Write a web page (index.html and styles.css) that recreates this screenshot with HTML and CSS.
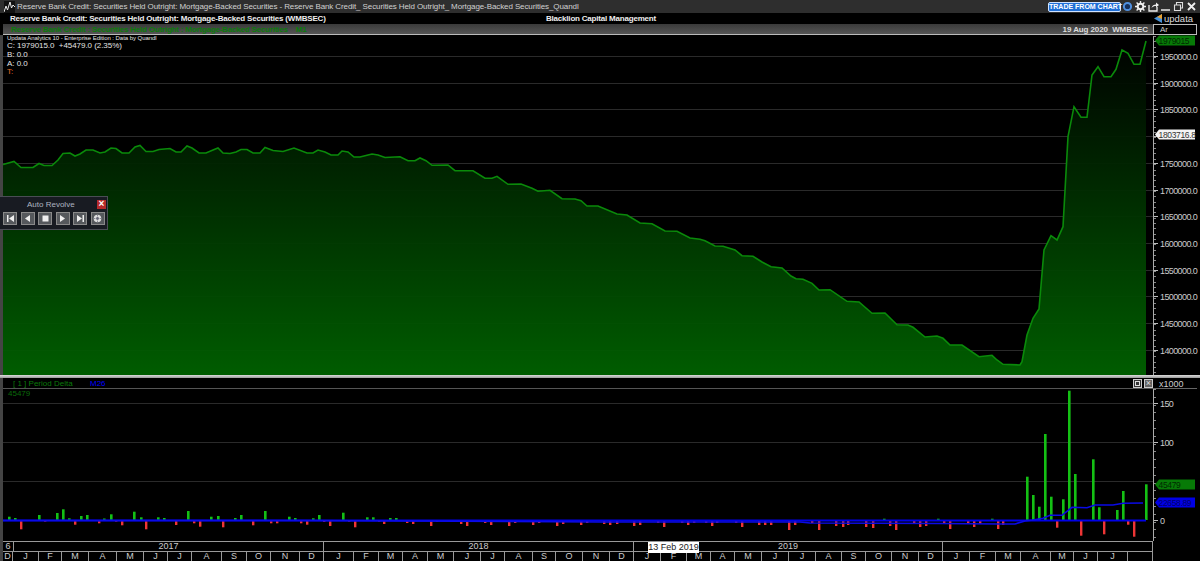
FILE: index.html
```html
<!DOCTYPE html>
<html>
<head>
    <title>Reserve Bank Credit - WMBSEC</title>
    <link rel="stylesheet" href="styles.css">
</head>
<body>
    <div class="app">
        <div class="titlebar">
            <svg class="app-logo" viewBox="0 0 11 12"><path d="M0 11 L2 5 L3.5 9 L6 1 L7.5 7 L9 4 L11 6" fill="none" stroke="#e8e8e8" stroke-width="1"/></svg>
            <span class="title-text">Reserve Bank Credit: Securities Held Outright: Mortgage-Backed Securities - Reserve Bank Credit_ Securities Held Outright_ Mortgage-Backed Securities_Quandl</span>
            <button class="trade-button">TRADE FROM CHART</button>
            <div class="window-icons">
                <svg viewBox="0 0 11 11"><circle cx="5.5" cy="5.5" r="3.6" fill="#16305c" stroke="#4f8fe0" stroke-width="2"/></svg>
                <svg viewBox="0 0 11 11"><circle cx="5.5" cy="5.5" r="2.8" fill="none" stroke="#eee" stroke-width="2"/><path d="M5.5 0V2M5.5 9V11M0 5.5H2M9 5.5H11M1.6 1.6L3 3M8 8L9.4 9.4M1.6 9.4L3 8M8 3L9.4 1.6" stroke="#eee" stroke-width="1.4"/></svg>
                <svg viewBox="0 0 11 11"><path d="M1 4V10H9V6" fill="none" stroke="#eee" stroke-width="1.3"/><path d="M3.5 7C4 4.5 6 3.5 8 3.5V1.5L11 4L8 6.5V5C6 5 5 5.5 3.5 7Z" fill="#eee"/></svg>
                <svg viewBox="0 0 11 11"><path d="M1 9H10" stroke="#ddd" stroke-width="1.6"/></svg>
                <svg viewBox="0 0 11 11"><path d="M1.5 4H7.5V9.5H1.5ZM3.5 4V1.5H9.5V7H7.5" fill="none" stroke="#ddd" stroke-width="1.1"/></svg>
                <svg viewBox="0 0 11 11"><path d="M2 2L9 9M9 2L2 9" stroke="#eee" stroke-width="1.8"/></svg>
            </div>
        </div>

        <div class="headline">
            <span class="headline-title">Reserve Bank Credit: Securities Held Outright: Mortgage-Backed Securities (WMBSEC)</span>
            <span class="headline-company">Blacklion Capital Management</span>
            <div class="brand">
                <svg viewBox="0 0 8 9"><path d="M0 4.5L8 0V9Z" fill="#4a94dc"/><path d="M3 3L8 0V5Z" fill="#e8a030"/></svg>
                <span>updata</span>
            </div>
        </div>

        <div class="subbar">
            <div class="subbar-plot">
                <span class="subbar-name">Reserve Bank Credit : Securities Held Outright : Mortgage-Backed Securities &nbsp;&nbsp; M1</span>
                <span class="subbar-date">19 Aug 2020&nbsp; WMBSEC</span>
            </div>
            <div class="subbar-axis">Ar</div>
        </div>

        <div class="pane pane-main">
            <div class="plot">
                <svg id="price-plot" class="plot-svg" viewBox="3 35 1150 340"></svg>
                <div class="legend">
                    <div class="legend-small">Updata Analytics 10 - Enterprise Edition : Data by Quandl</div>
                    <div>C: 1979015.0 &nbsp;+45479.0 (2.35%)</div>
                    <div>B: 0.0</div>
                    <div>A: 0.0</div>
                    <div class="legend-t">T:</div>
                </div>
            </div>
            <svg id="price-axis" class="axis-svg" viewBox="1153 35 47 340"></svg>
        </div>

        <div class="divider"></div>

        <div class="pane pane-lower">
            <div class="plot">
                <div class="delta-header">
                    <span class="delta-name">[ 1 ] Period Delta</span>
                    <span class="delta-ma">M26</span>
                    <div class="pane-buttons">
                        <span class="pane-button"><span class="pane-button-dot"></span></span>
                        <span class="pane-button pane-button-x">×</span>
                    </div>
                </div>
                <div class="delta-value">45479</div>
                <svg id="delta-plot" class="delta-svg" viewBox="3 389 1150 152"></svg>
            </div>
            <svg id="delta-axis" class="axis-svg" viewBox="1153 378 47 163"></svg>
        </div>

        <div class="timeline">
            <div class="year-row" id="year-row"></div>
            <div class="month-row" id="month-row"></div>
            <div class="date-flag">13 Feb 2019</div>
        </div>

        <div class="revolve">
            <div class="revolve-head">
                <span>Auto Revolve</span>
                <button class="revolve-close">×</button>
            </div>
            <div class="revolve-buttons">
                <button><svg viewBox="0 0 9 9"><path d="M1 1H2.5V8H1ZM8 1V8L3 4.5Z" fill="#eee"/></svg></button>
                <button><svg viewBox="0 0 9 9"><path d="M7 1V8L2 4.5Z" fill="#eee"/></svg></button>
                <button><svg viewBox="0 0 9 9"><path d="M1.5 1.5H7.5V7.5H1.5Z" fill="#eee"/></svg></button>
                <button><svg viewBox="0 0 9 9"><path d="M2 1V8L7 4.5Z" fill="#eee"/></svg></button>
                <button><svg viewBox="0 0 9 9"><path d="M1 1V8L6 4.5ZM6.5 1H8V8H6.5Z" fill="#eee"/></svg></button>
                <button><svg viewBox="0 0 9 9"><circle cx="4.5" cy="4.5" r="3.8" fill="#ddd"/><circle cx="4.5" cy="4.5" r="1.4" fill="#667"/><path d="M4.5 0.7V2.4M4.5 6.6V8.3M0.7 4.5H2.4M6.6 4.5H8.3" stroke="#667" stroke-width=".7"/></svg></button>
            </div>
        </div>
    </div>

    <script src="chart.js"></script>
</body>
</html>
```

FILE: styles.css
```css
body {
    margin: 0;
    background-color: #000;
    font-family: "Liberation Sans", Arial, sans-serif;
    color: #ddd;
    overflow: hidden;
}
.app {
    position: relative;
    width: 1200px;
    height: 561px;
    display: flex;
    flex-direction: column;
    overflow: hidden;
}
.titlebar {
    height: 13px;
    display: flex;
    align-items: center;
    background-color: #2e2e2e;
    padding-left: 4px;
    font-size: 8px;
    color: #d0d0d0;
}
.app-logo {
    width: 11px;
    height: 12px;
    margin-right: 2px;
    background-color: #111;
}
.title-text {
    flex: 1;
    white-space: nowrap;
    letter-spacing: -0.1px;
    overflow: hidden;
}
.trade-button {
    width: 73px;
    height: 10px;
    padding: 0;
    border: 1px solid #cfe2ff;
    border-radius: 2px;
    background-color: #1f6fd6;
    color: #fff;
    font-family: inherit;
    font-size: 7px;
    font-weight: bold;
    line-height: 8px;
    white-space: nowrap;
    margin-right: 1px;
}
.window-icons {
    display: flex;
    gap: 1.8px;
    padding-right: 3px;
}
.window-icons svg {
    width: 11px;
    height: 11px;
    display: block;
}
.headline {
    height: 11px;
    display: flex;
    align-items: center;
    padding-left: 10px;
    background-color: #000;
    font-size: 8px;
    font-weight: bold;
    color: #eee;
    white-space: nowrap;
}
.headline-title {
    width: 536px;
    letter-spacing: -0.19px;
}
.headline-company {
    width: 608px;
    letter-spacing: -0.2px;
}
.brand {
    display: flex;
    align-items: center;
    gap: 2px;
    font-size: 9.5px;
    font-weight: normal;
    color: #ddd;
}
.brand svg {
    width: 8px;
    height: 9px;
}
.subbar {
    height: 11px;
    display: flex;
    font-size: 8px;
    white-space: nowrap;
}
.subbar-plot {
    width: 1150px;
    margin-left: 3px;
    display: flex;
    justify-content: space-between;
    align-items: center;
    box-sizing: border-box;
    padding: 0 5px 0 8px;
    background: linear-gradient(#3a3a3a, #555);
    border-bottom: 1px solid #bbb;
}
.subbar-name {
    color: #0a7a0a;
    font-weight: bold;
    letter-spacing: -0.2px;
}
.subbar-date {
    color: #ddd;
    font-weight: bold;
    letter-spacing: -0.1px;
}
.subbar-axis {
    width: 44px;
    box-sizing: border-box;
    padding-left: 6px;
    border: 1px solid #bbb;
    line-height: 9px;
    color: #ccc;
}
.pane {
    display: flex;
}
.pane-main {
    height: 340px;
}
.pane-lower {
    height: 163px;
}
.plot {
    position: relative;
    width: 1150px;
    display: flex;
    flex-direction: column;
    border-left: 3px solid #444;
    box-shadow: -1px 0 0 #bbb;
}
.plot-svg {
    width: 1150px;
    height: 340px;
    display: block;
}
.axis-svg {
    width: 47px;
    height: 100%;
    display: block;
}
.axis-label {
    letter-spacing: -0.6px;
}
.axis-tag {
    letter-spacing: -0.35px;
}
.legend {
    position: absolute;
    left: 4px;
    top: 0;
    font-size: 8px;
    line-height: 8.8px;
    letter-spacing: -0.05px;
    color: #e4e4e4;
}
.legend-small {
    font-size: 6px;
    line-height: 7px;
}
.legend-t {
    color: #e8702a;
}
.divider {
    height: 3px;
    background: linear-gradient(#ddd, #999);
}
.delta-header {
    height: 11px;
    box-sizing: border-box;
    display: flex;
    align-items: center;
    padding-left: 10px;
    border-bottom: 1px solid #555;
    font-size: 8px;
}
.delta-name {
    width: 77px;
    color: #0a7a0a;
}
.delta-ma {
    color: #0000ff;
}
.pane-buttons {
    margin-left: auto;
    display: flex;
    gap: 2px;
}
.pane-button {
    width: 7px;
    height: 7px;
    display: flex;
    align-items: center;
    justify-content: center;
    border: 1px solid #ccc;
    background-color: #333;
    color: #ddd;
    font-size: 9px;
    line-height: 7px;
}
.pane-button-dot {
    width: 3px;
    height: 3px;
    border: 1px solid #ddd;
}
.pane-button-x {
    background-color: #666;
}
.delta-value {
    position: absolute;
    left: 5px;
    top: 11px;
    font-size: 8px;
    line-height: 9px;
    color: #0a6a0a;
}
.delta-svg {
    width: 1150px;
    height: 152px;
    display: block;
}
.timeline {
    position: relative;
    width: 1150px;
    height: 20px;
    border-left: 3px solid #444;
    font-size: 9px;
    color: #ccc;
}
.year-row,
.month-row {
    height: 10px;
    box-sizing: border-box;
    display: flex;
    border-top: 1px solid #999;
    line-height: 9px;
}
.time-cell {
    box-sizing: border-box;
    border-right: 1px solid #999;
    text-align: center;
    overflow: hidden;
}
.date-flag {
    position: absolute;
    left: 645px;
    top: 1px;
    width: 51px;
    height: 11px;
    background-color: #fff;
    color: #222;
    line-height: 11px;
    text-align: center;
}
.revolve {
    position: absolute;
    left: 0;
    top: 196px;
    width: 108px;
    height: 34px;
    box-sizing: border-box;
    background-color: #181b22;
    border: 1px solid #4a4d55;
    border-left: 0;
    font-size: 8px;
    color: #aeb4c0;
}
.revolve-head {
    height: 14px;
    display: flex;
    align-items: center;
    justify-content: space-between;
    padding: 0 1px 0 27px;
}
.revolve-close {
    width: 9px;
    height: 9px;
    padding: 0;
    border: 0;
    background-color: #b52a2a;
    color: #fff;
    font-family: inherit;
    font-size: 10px;
    font-weight: bold;
    line-height: 8px;
}
.revolve-buttons {
    display: flex;
    gap: 3.6px;
    padding-left: 3px;
    padding-top: 1px;
}
.revolve-buttons button {
    width: 14px;
    height: 13px;
    padding: 0;
    border: 1px solid #8a8a8a;
    background-color: #55585c;
    display: flex;
    align-items: center;
    justify-content: center;
}
.revolve-buttons svg {
    width: 9px;
    height: 9px;
}
```

FILE: chart.js
```js
const NS = 'http://www.w3.org/2000/svg';

// screen coordinates read off the weekly close line
const closeLine = [
    [3,164.5],[14,161.5],[21,167.5],[33,167.5],[39,163.5],[44,165.5],[52,165.5],[58,160],[63,153.5],[70,153],
    [75,156],[80,154],[86,150],[93,150],[100,153],[105,152],[111,148],[116,148.5],[122,153],[129,153],
    [135,147],[140,145.5],[146,151.5],[153,151.5],[159,149.5],[170,148.5],[176,152],[181,152],[187,146],[192,148],
    [199,153],[206,153],[213,150],[218,148],[223,153],[230,153.5],[236,152],[241,149.5],[247,149.5],[253,153],
    [260,153],[265,147.5],[273,150.5],[283,151.5],[294,148],[307,153],[313,153],[318,150],[325,152],[331,155],
    [338,155],[342,151],[348,152],[354,157],[360,157],[372,154],[378,155],[385,157.5],[400,156.7],[408,160.7],
    [415,160.7],[420,158],[426,160.7],[432,165.3],[448,165],[455,170.7],[473,170.7],[485,178.3],[492,178.3],[497,176.3],
    [508,184.3],[521,184],[532,188.3],[538,191.3],[550,190.3],[562,198.7],[575,199],[581,200.7],[587,206],[598,206],
    [617,214],[627,215],[640,223],[652,223.7],[665,231],[677,231.3],[690,238],[700,239.3],[705,240.7],[715,246],
    [723,246.3],[735,250],[742,255.7],[753,256.3],[762,262],[771,266.7],[782,268],[791,276],[796,278.7],[803,279.3],
    [812,283.3],[819,290],[830,289.7],[847,301.3],[859,302],[872,313.3],[885,313],[897,324.7],[908,325],[913,327.3],
    [925,337],[937,336],[943,338.3],[950,345],[962,345],[979,356.7],[992,355.3],[997,360],[1003,364.3],[1020,365],
    [1022,361.7],[1027,335],[1033,318.3],[1039,309],[1044,250],[1051,235.7],[1057,240],[1063,226.7],[1068,136.7],[1074,106.7],
    [1081,117.3],[1087,117.3],[1092,75],[1098,66.7],[1104,76.7],[1111,76.7],[1116,69.3],[1122,50],[1128,53.3],[1134,64.3],
    [1140,64.3],[1146,41]
];

// [x, top of bar]
const upBars = [
    [8,516.7],[14,518],[38,515],[56,513],[62,509.3],[68,518.3],[80,516],[86,515],[103,518.5],[110,514.3],
    [133,511.7],[140,517.3],[157,517.3],[163,518],[187,511],[210,516.7],[217,516],[234,518],[240,515],[264,511],
    [288,516.7],[294,518],[312,518.3],[318,515],[342,512.7],[366,517.3],[372,517.3],[389,518],[395,518],
    [883,518.7],[937,518.7],[991,518.7],[1026,476.7],[1032,495],[1038,506.7],[1044,434],[1050,496.7],[1062,499.3],
    [1068,390.7],[1074,474],[1092,459.3],[1098,507.3],[1116,510],[1122,491],[1145,484.3]
];

// [x, bottom of bar]
const downBars = [
    [20,529.3],[44,521.7],[74,524.7],[98,523.3],[115,521.7],[121,525.3],[145,529.3],[175,525],[193,523.3],[199,526.7],
    [222,527.3],[228,521],[246,521],[252,525.3],[270,523.3],[276,523.3],[300,523.3],[306,524.7],[323,522],[329,526],
    [348,521.7],[354,527.3],[378,521.7],[383,524],[406,523],[412,524],[430,526],[436,522],[460,524],[466,526],
    [484,523],[490,525],[508,526],[514,523],[532,525],[538,523],[556,526],[562,524],[580,525],[586,523],
    [603,524],[609,525],[616,524],[633,526],[639,525],[657,523],[663,527],[681,523],[687,525],[693,523],
    [705,523],[711,526],[716,523],[735,523],[741,527],[758,525],[764,525],[770,525],[788,530],[794,525],
    [811,523],[818,530],[835,526],[842,527],[847,525],[865,527],[872,528],[889,526],[895,530],[913,523],
    [919,527],[925,526],[943,524],[949,529],[967,524],[973,527],[979,524],[997,529],[1002,525],[1056,527.7],
    [1080,535.7],[1103,534.3],[1127,524.7],[1133,536.7]
];

const maLine = [
    [3,520.5],[300,520.5],[600,522],[800,522],[810,523],[940,523.5],[1000,524],[1015,524],[1025,521],[1033,520],
    [1043,518.3],[1050,515.3],[1062,515.3],[1072,507.3],[1087,507.7],[1095,505],[1113,505],[1123,503.3],[1143,503]
];

const years = [
    { label: '6', width: 11 },
    { label: '2017', width: 310 },
    { label: '2018', width: 310 },
    { label: '2019', width: 309 },
    { label: '', width: 210 }
];

const months = [
    ['D',10],
    ['J',26],['F',23],['M',27],['A',28],['M',27],['J',24],['J',24],['A',30],['S',25],['O',24],['N',29],['D',24],
    ['J',30],['F',25],['M',24],['A',25],['M',26],['J',27],['J',24],['A',28],['S',23],['O',27],['N',27],['D',24],
    ['J',27],['F',26],['M',24],['A',24],['M',27],['J',27],['J',27],['A',26],['S',24],['O',26],['N',27],['D',24],
    ['J',27],['F',26],['M',25],['A',30],['M',23],['J',24],['J',30],['',25]
];

function el(svg, tag, attrs, text) {
    const node = document.createElementNS(NS, tag);
    Object.keys(attrs).forEach(key => node.setAttribute(key, attrs[key]));
    if (text) node.textContent = text;
    svg.appendChild(node);
    return node;
}

function toPoints(list) {
    return list.map(p => p.join(',')).join(' ');
}

function hLine(svg, y, x1, x2, color) {
    el(svg, 'line', { x1: x1, x2: x2, y1: y, y2: y, stroke: color, 'stroke-width': 1 });
}

function axisLabel(svg, y, text) {
    el(svg, 'text', { x: 1160, y: y + 3, class: 'axis-label', fill: '#ccc', 'font-size': 9 }, text);
}

// pointed tag that sits on the axis
function axisTag(svg, y, fill, color, text) {
    el(svg, 'polygon', {
        points: `1155,${y} 1159,${y - 5} 1195,${y - 5} 1195,${y + 5} 1159,${y + 5}`,
        fill: fill
    });
    el(svg, 'text', { x: 1158.5, y: y + 3, class: 'axis-tag', fill: color, 'font-size': 8.5 }, text);
}

function axisRail(svg, top, bottom, step) {
    el(svg, 'line', { x1: 1153.5, x2: 1153.5, y1: top, y2: bottom, stroke: '#aaa', 'stroke-width': 1 });
    for (let y = top; y < bottom; y += step) {
        hLine(svg, Math.round(y) + 0.5, 1154, 1156, '#888');
    }
}

function drawPrice() {
    const plot = document.getElementById('price-plot');
    const defs = el(plot, 'defs', {});
    const grad = el(defs, 'linearGradient', { id: 'area', x1: 0, x2: 0, y1: 35, y2: 375, gradientUnits: 'userSpaceOnUse' });
    el(grad, 'stop', { offset: 0, 'stop-color': '#000' });
    el(grad, 'stop', { offset: 1, 'stop-color': '#006000' });

    for (let i = 0; i < 12; i++) {
        hLine(plot, Math.round(56 + i * 26.7) + 0.5, 3, 1153, '#2a2a2a');
    }

    const area = [[3, 375]].concat(closeLine, [[1146, 375]]);
    el(plot, 'polygon', { points: toPoints(area), fill: 'url(#area)', 'fill-opacity': 0.96 });
    el(plot, 'polyline', { points: toPoints(closeLine), fill: 'none', stroke: '#0a8a0a', 'stroke-width': 1.6 });

    const axis = document.getElementById('price-axis');
    axisRail(axis, 36, 375, 5.34);
    const labels = ['1950000.0', '1900000.0', '1850000.0', null, '1750000.0', '1700000.0', '1650000.0', '1600000.0', '1550000.0', '1500000.0', '1450000.0', '1400000.0'];
    labels.forEach((label, i) => {
        const y = Math.round(56 + i * 26.7) + 0.5;
        hLine(axis, y, 1154, 1158, '#bbb');
        if (label) axisLabel(axis, y, label);
    });
    axisTag(axis, 40.5, '#077a07', '#012a01', '1979015');
    axisTag(axis, 134.5, '#f4f4f4', '#333', '1803716.8');
}

function drawDelta() {
    const plot = document.getElementById('delta-plot');
    [403, 442, 481].forEach(y => hLine(plot, y + 0.5, 3, 1153, '#2a2a2a'));

    upBars.forEach(bar => {
        el(plot, 'rect', { x: bar[0], y: bar[1], width: 2.6, height: 520 - bar[1], fill: '#14c014' });
    });
    downBars.forEach(bar => {
        el(plot, 'rect', { x: bar[0], y: 520, width: 2.4, height: bar[1] - 520, fill: '#ee3535' });
    });

    el(plot, 'line', { x1: 3, x2: 1146, y1: 520.5, y2: 520.5, stroke: '#0000e6', 'stroke-width': 2 });
    el(plot, 'polyline', { points: toPoints(maLine), fill: 'none', stroke: '#0a0ae6', 'stroke-width': 1.6 });

    const axis = document.getElementById('delta-axis');
    el(axis, 'text', { x: 1159, y: 387, fill: '#ccc', 'font-size': 9 }, 'x1000');
    hLine(axis, 388.5, 1153, 1197, '#666');
    axisRail(axis, 389, 541, 7.8);
    [[403, '150'], [442, '100'], [520, '0']].forEach(tick => {
        hLine(axis, tick[0] + 0.5, 1154, 1158, '#bbb');
        axisLabel(axis, tick[0] + 0.5, tick[1]);
    });
    axisTag(axis, 484.5, '#077a07', '#012a01', '45479');
    axisTag(axis, 502.5, '#0000e6', '#00006a', '22658.89');
}

function drawTimeline() {
    const yearRow = document.getElementById('year-row');
    years.forEach(year => {
        const cell = document.createElement('div');
        cell.className = 'time-cell';
        cell.style.width = year.width + 'px';
        cell.textContent = year.label;
        yearRow.appendChild(cell);
    });

    const monthRow = document.getElementById('month-row');
    months.forEach(month => {
        const cell = document.createElement('div');
        cell.className = 'time-cell';
        cell.style.width = month[1] + 'px';
        cell.textContent = month[0];
        monthRow.appendChild(cell);
    });
}

drawPrice();
drawDelta();
drawTimeline();
```
